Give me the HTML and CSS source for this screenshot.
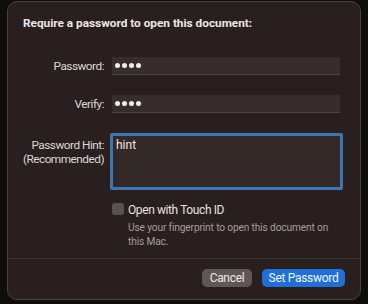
FILE: index.html
```html
<!DOCTYPE html>
<html>
<head>
<meta charset="utf-8">
<link rel="stylesheet" href="styles.css">
</head>
<body>
<div class="dialog">
  <div class="title">Require a password to open this document:</div>
  <div class="form">
    <label class="label">Password:</label>
    <div class="field"><span class="dot"></span><span class="dot"></span><span class="dot"></span><span class="dot"></span></div>
    <label class="label">Verify:</label>
    <div class="field"><span class="dot"></span><span class="dot"></span><span class="dot"></span><span class="dot"></span></div>
    <label class="label label-top">Password Hint:<br>(Recommended)</label>
    <div class="hint">hint</div>
  </div>
  <div class="touch">
    <span class="check"></span>
    <div class="touch-text">
      <div class="touch-title">Open with Touch ID</div>
      <div class="touch-desc">Use your fingerprint to open this document on this Mac.</div>
    </div>
  </div>
  <div class="footer">
    <button class="btn btn-cancel">Cancel</button>
    <button class="btn btn-primary">Set Password</button>
  </div>
</div>
</body>
</html>
```
FILE: styles.css
```css
html, body {
  margin: 0;
  padding: 0;
  background: #0f0c0c;
  width: 368px;
  height: 304px;
  overflow: hidden;
}
body {
  font-family: Roboto, "Liberation Sans", sans-serif;
  color: #e6e1e1;
}
.dialog {
  box-sizing: border-box;
  margin: 1px 7px 0 7px;
  width: 354px;
  height: 299px;
  background: #2a1f1f;
  border: 1px solid #4a4242;
  border-radius: 10px;
  display: flex;
  flex-direction: column;
}
.title {
  font-size: 11.8px;
  font-weight: 700;
  line-height: 16px;
  padding: 13px 0 0 15px;
  color: #ece8e8;
}
.form {
  display: grid;
  grid-template-columns: 96px 228px;
  column-gap: 8px;
  row-gap: 20px;
  margin-top: 26px;
  align-items: center;
}
.label {
  text-align: right;
  font-size: 11.8px;
  letter-spacing: -0.5px;
  line-height: 14px;
  color: #dcd7d7;
}
.label-top {
  align-self: start;
  margin-top: 5px;
}
.field {
  height: 18px;
  background: #382d2d;
  border-bottom: 1px solid #4c4242;
  box-sizing: border-box;
  display: flex;
  align-items: center;
  gap: 2px;
  padding-left: 3px;
}
.dot {
  width: 5px;
  height: 5px;
  border-radius: 50%;
  background: #f2eeee;
}
.hint {
  margin-left: -2px;
  width: 233px;
  height: 57px;
  box-sizing: border-box;
  border: 3px solid #3b78b2;
  border-radius: 2px;
  background: #342929;
  font-size: 12px;
  line-height: 14px;
  padding: 2px 0 0 3px;
  color: #ece8e8;
}
.touch {
  display: flex;
  gap: 4px;
  margin: 13px 0 0 104px;
}
.check {
  flex: none;
  width: 12px;
  height: 12px;
  border-radius: 3px;
  background: #5a5151;
}
.touch-title {
  font-size: 12px;
  letter-spacing: -0.4px;
  line-height: 15px;
  color: #e6e1e1;
}
.touch-desc {
  margin-top: 3px;
  font-size: 10.2px;
  letter-spacing: -0.15px;
  line-height: 14px;
  color: #a59d9d;
  width: 205px;
}
.footer {
  margin-top: auto;
  border-top: 1px solid #3e3434;
  display: flex;
  justify-content: flex-end;
  gap: 10px;
  padding: 10px 15px 12px 0;
}
.btn {
  font-family: inherit;
  font-size: 12px;
  letter-spacing: -0.3px;
  height: 18px;
  line-height: 18px;
  border: none;
  border-radius: 5px;
  padding: 0;
  color: #eeeaea;
}
.btn-cancel {
  width: 50px;
  background: #5f5656;
}
.btn-primary {
  width: 83px;
  background: #1f6fd8;
  color: #f4f8ff;
}
```
